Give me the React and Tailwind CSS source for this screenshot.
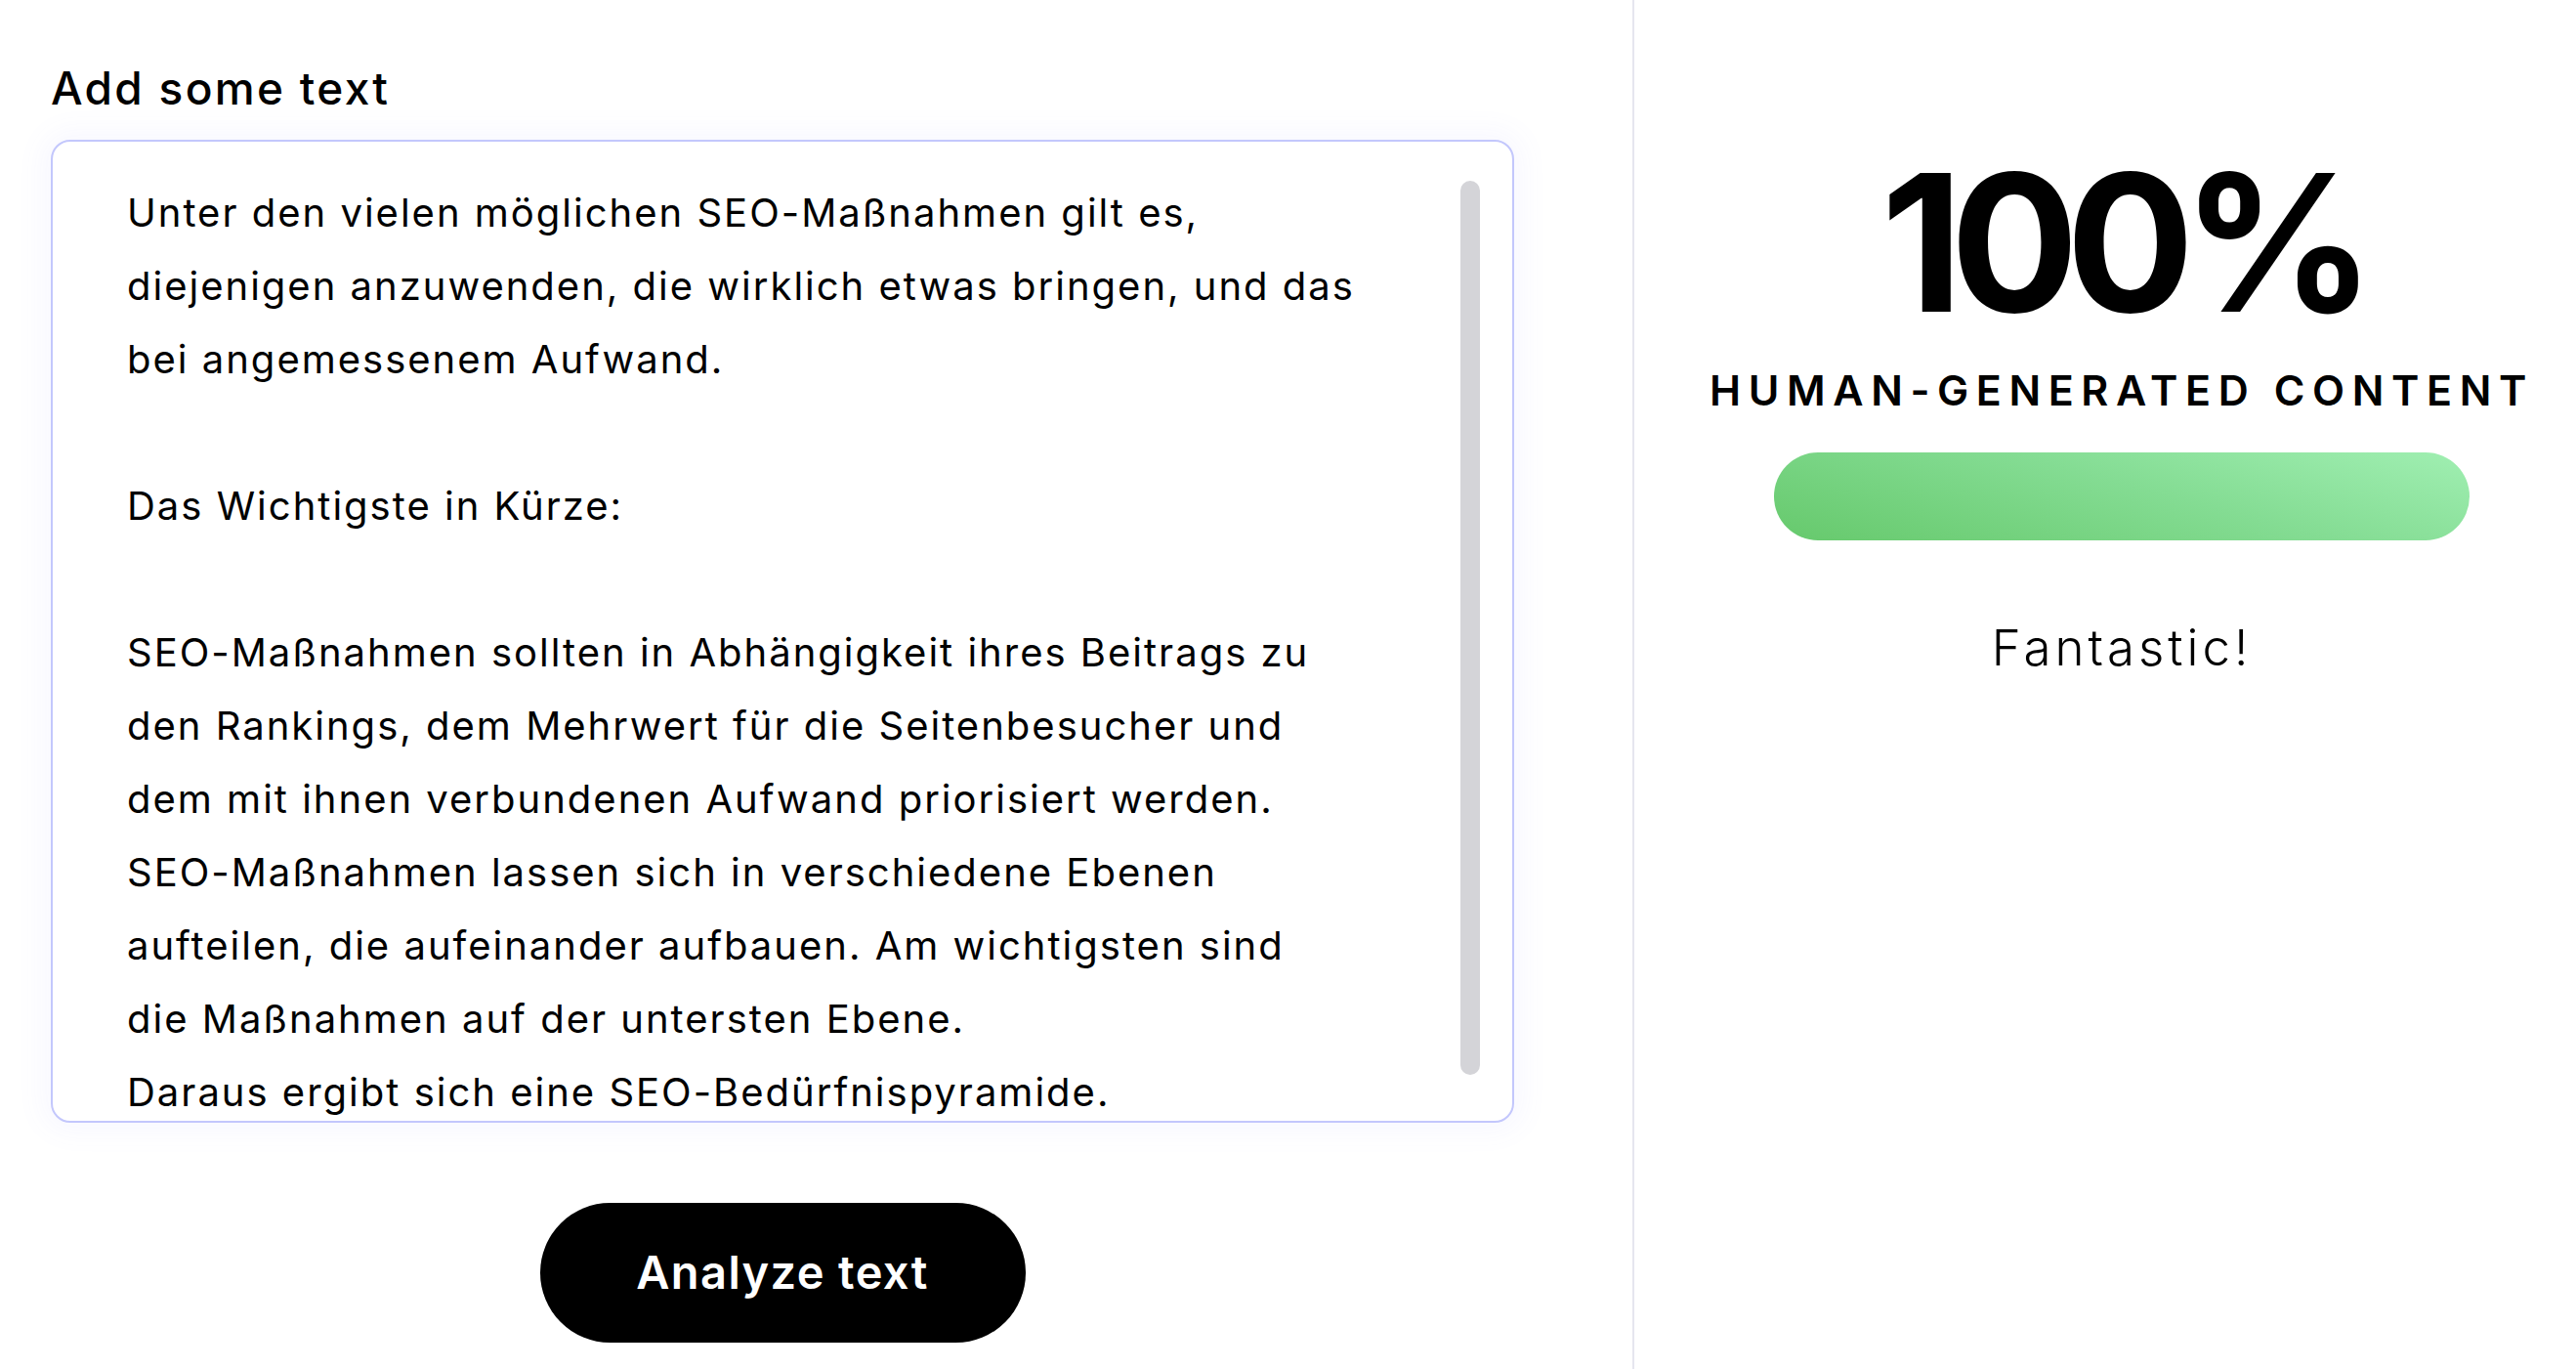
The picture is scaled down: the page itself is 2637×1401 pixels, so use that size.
const lines = [
  'Unter den vielen möglichen SEO-Maßnahmen gilt es,',
  'diejenigen anzuwenden, die wirklich etwas bringen, und das',
  'bei angemessenem Aufwand.',
  '',
  'Das Wichtigste in Kürze:',
  '',
  'SEO-Maßnahmen sollten in Abhängigkeit ihres Beitrags zu',
  'den Rankings, dem Mehrwert für die Seitenbesucher und',
  'dem mit ihnen verbundenen Aufwand priorisiert werden.',
  'SEO-Maßnahmen lassen sich in verschiedene Ebenen',
  'aufteilen, die aufeinander aufbauen. Am wichtigsten sind',
  'die Maßnahmen auf der untersten Ebene.',
  'Daraus ergibt sich eine SEO-Bedürfnispyramide.',
];

function TextBox() {
  return (
    <div className="relative mt-[30px] h-[1006px] w-[1498px] overflow-hidden rounded-[20px] border-2 border-[#c3c7fc] bg-white shadow-[0_0_28px_10px_rgba(120,125,255,0.05)]">
      <div className="pl-[76px] pt-[35px] text-[40px] leading-[75px] tracking-[2px] text-black">
        {lines.map((line, i) =>
          line ? (
            <div key={i} className="whitespace-nowrap">{line}</div>
          ) : (
            <div key={i} className="h-[75px]" />
          )
        )}
      </div>
      <div className="absolute right-[33px] top-[40px] h-[915px] w-[20px] rounded-full bg-[#d4d4d8]" />
    </div>
  );
}

export default function App() {
  return (
    <div className="flex h-[1401px] w-full overflow-hidden bg-white font-['Inter',sans-serif] text-black">
      <div className="flex w-[1673px] shrink-0 flex-col border-r-2 border-[#e6e6ef] pl-[52px] pt-[67px]">
        <h2 className="text-[46px] font-medium leading-none tracking-[2.3px]">Add some text</h2>
        <TextBox />
        <div className="flex w-[1498px] justify-center">
          <button className="mt-[82px] h-[143px] w-[497px] rounded-full bg-black text-[47px] font-semibold tracking-[1.4px] text-white">
            Analyze text
          </button>
        </div>
      </div>
      <div className="flex flex-1 flex-col items-center pl-[34px] pt-[151px]">
        <div className="text-[195px] font-bold leading-none tracking-[-13px]">100%</div>
        <div className="mt-[32px] text-[43px] font-semibold uppercase leading-none tracking-[7.6px]">
          Human-Generated Content
        </div>
        <div className="mt-[42px] h-[90px] w-[712px] rounded-full bg-[linear-gradient(195deg,#a0efb2_0%,#84dc93_45%,#66c96c_100%)]" />
        <div className="mt-[84px] text-[51px] font-light leading-none tracking-[4px]">Fantastic!</div>
      </div>
    </div>
  );
}
